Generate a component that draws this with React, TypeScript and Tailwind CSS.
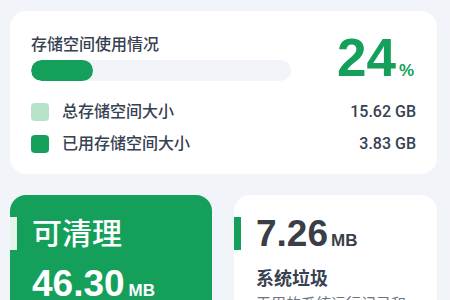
export default function App() {
  const font = { fontFamily: '"Liberation Sans", "Noto Sans CJK SC", sans-serif' }

  return (
    <div className="w-[450px] h-[300px] overflow-hidden bg-[#f1f4f9] pt-[11px] pl-[10px]" style={font}>
      {/* 存储概览 */}
      <div className="w-[427px] h-[163px] bg-white rounded-[16px] px-[21px] pt-[20px]">
        <div className="flex items-center justify-between">
          <div className="w-[260px]">
            <div className="text-[16px] leading-[20px] font-medium text-[#374151]">存储空间使用情况</div>
            <div className="mt-[5px] h-[21px] rounded-full bg-[#f1f4f9] overflow-hidden">
              <div className="h-full rounded-full bg-[#14a05a]" style={{ width: '24%' }} />
            </div>
          </div>
          <div className="flex items-baseline pr-[2px] text-[#14a05a] font-bold">
            <span className="text-[53px] leading-none">24</span>
            <span className="text-[17px] leading-none ml-[3px]">%</span>
          </div>
        </div>

        <div className="mt-[19px] flex flex-col gap-[14px]">
          <div className="flex items-center h-[18px]">
            <span className="w-[18px] h-[18px] rounded-[4px] bg-[#b6e3ca]" />
            <span className="ml-[13px] text-[16px] font-medium text-[#374151]">总存储空间大小</span>
            <span className="ml-auto text-[16px] font-medium font-[Roboto] text-[#374151]">15.62 GB</span>
          </div>
          <div className="flex items-center h-[18px]">
            <span className="w-[18px] h-[18px] rounded-[4px] bg-[#14a05a]" />
            <span className="ml-[13px] text-[16px] font-medium text-[#374151]">已用存储空间大小</span>
            <span className="ml-auto text-[16px] font-medium font-[Roboto] text-[#374151]">3.83 GB</span>
          </div>
        </div>
      </div>

      {/* 清理卡片 */}
      <div className="mt-[21px] w-[427px] grid grid-cols-[202px_203px] gap-[22px]">
        <div className="h-[130px] bg-[#14a05a] rounded-[16px] pt-[22px]">
          <div className="flex items-center">
            <span className="w-[7px] h-[33px] bg-[#e6f5ec]" />
            <span className="ml-[15px] text-[30px] leading-[33px] font-medium text-white">可清理</span>
          </div>
          <div className="mt-[15px] pl-[22px] flex items-baseline text-white font-bold">
            <span className="text-[37px] leading-none">46.30</span>
            <span className="ml-[4px] text-[17px] leading-none">MB</span>
          </div>
        </div>

        <div className="h-[130px] bg-white rounded-[16px] pt-[22px]">
          <div className="flex items-center">
            <span className="w-[7px] h-[33px] bg-[#14a05a]" />
            <div className="ml-[15px] flex items-baseline text-[#3a3f47] font-bold">
              <span className="text-[37px] leading-[33px]">7.26</span>
              <span className="ml-[3px] text-[17px] leading-none">MB</span>
            </div>
          </div>
          <div className="mt-[18px] pl-[22px] text-[18px] leading-[22px] font-bold text-[#374151]">系统垃圾</div>
          <div className="mt-[4px] pl-[22px] text-[15px] leading-[20px] text-[#6b7280]">无用的系统运行记录和</div>
        </div>
      </div>
    </div>
  )
}
